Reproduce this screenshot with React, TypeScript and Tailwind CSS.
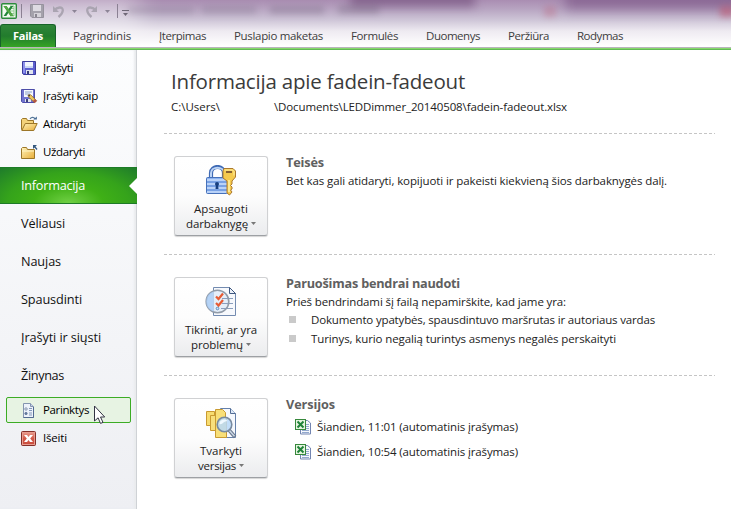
import { useLayoutEffect, useRef, useState } from "react";
import type { ReactNode } from "react";

/* A single line of text whose tracking is adjusted to fill a given width. */
function Label({ w, text, className = "" }: { w: number; text: string; className?: string }) {
  const ref = useRef<HTMLSpanElement>(null);
  const [spacing, setSpacing] = useState(0);
  useLayoutEffect(() => {
    if (ref.current) {
      setSpacing((w - ref.current.getBoundingClientRect().width) / text.length);
    }
  }, [w, text]);
  return (
    <span ref={ref} className={`inline-block whitespace-pre ${className}`} style={{ letterSpacing: spacing }}>
      {text}
    </span>
  );
}

function ExcelLogo() {
  return (
    <svg width="16" height="16" viewBox="0 0 16 16">
      <rect x=".7" y=".7" width="14.6" height="14.6" rx="1" fill="#f4fbf2" stroke="#2c8a3c" strokeWidth="1.4" />
      <path d="M9 3h4v10H9M9 5.5h4M9 8h4M9 10.5h4" fill="none" stroke="#8fc98f" />
      <path d="M2.5 3h3l2 3 2.2-3h2.6L8.9 8l3.6 5h-3l-2-3.2L5.3 13H2.6L6 8z" fill="#23863a" />
      <path d="M2.5 3h3l7 10h-3z" fill="#55a845" />
    </svg>
  );
}

function GreySave() {
  return (
    <svg width="14" height="14" viewBox="0 0 14 14">
      <path d="M.5.5h13v13H2L.5 12z" fill="#a4a1ab" stroke="#96929d" />
      <path d="M3 1h8v6H3z" fill="#dedbe2" />
      <path d="M4 9h7v4H4z" fill="#d5d2d9" />
      <path d="M5 10h2v3H5z" fill="#898590" />
    </svg>
  );
}

function Undo({ flip = false }: { flip?: boolean }) {
  return (
    <svg width="13" height="13" viewBox="0 0 13 13" className={flip ? "-scale-x-100" : ""}>
      <path d="M2 5.5C5 2 11 1 10.8 5.5 10.6 8.5 9 10 6.5 12" fill="none" stroke="#aaa4b1" strokeWidth="2.3" />
      <path d="M1 1v6h6z" fill="#aaa4b1" />
    </svg>
  );
}

function Caret({ className = "" }: { className?: string }) {
  return (
    <svg width="5" height="3" viewBox="0 0 5 3" className={className}>
      <path d="M0 0h5L2.5 3z" fill="currentColor" />
    </svg>
  );
}

function SaveIcon() {
  return (
    <svg width="16" height="16" viewBox="0 0 16 16">
      <path d="M1.5 1.5h13v13h-12l-1-1z" fill="#5c5fd0" stroke="#3b3c9b" />
      <path d="M2 2h2v11H2z" fill="#8d90ec" />
      <path d="M4 2h8v6H4z" fill="#f1f5fd" />
      <path d="M4 6h8v2H4z" fill="#cbd7f3" />
      <path d="M5 10h7v4H5z" fill="#dfe4ee" />
      <path d="M6 11h2v3H6z" fill="#343a75" />
    </svg>
  );
}

function SaveAsIcon() {
  return (
    <svg width="17" height="16" viewBox="0 0 17 16">
      <path d="M.5 1.5h13v13h-12l-1-1z" fill="#7174cf" stroke="#4c4da8" />
      <path d="M3 2h9v7H3z" fill="#f5f8fd" />
      <path d="M4 4h7M4 6h5" stroke="#8aa0c8" />
      <path d="M4 11h6v3H4z" fill="#e2e7ef" />
      <path d="M5 11h2v3H5z" fill="#3d427e" />
      <path d="M7 7l2.6-.3 6 6-2 2-6-5.6z" fill="#eac55d" stroke="#8f6829" strokeWidth=".8" />
      <path d="M7 7l2-.2-.3 2z" fill="#333" />
      <path d="M13.8 11l2 1.9-2 2-2-2z" fill="#b65345" />
    </svg>
  );
}

function FolderIcon({ open = false }: { open?: boolean }) {
  return (
    <svg width="17" height="16" viewBox="0 0 17 16">
      <defs>
        <linearGradient id="folder" x1="0" y1="0" x2="1" y2="1">
          <stop offset="0" stopColor="#fff3b9" />
          <stop offset="1" stopColor="#e8ad38" />
        </linearGradient>
      </defs>
      {open ? (
        <>
          <path d="M.5 13.5v-10l1-1h4l1 2h6v9z" fill="#f3d27a" stroke="#9c7628" />
          <path d="M.8 14.5l3.5-7h11.9l-3.4 7z" fill="url(#folder)" stroke="#9c7628" />
          <path d="M9 2.8c1.5-2 4-2 5 .2" fill="none" stroke="#557799" strokeWidth="1.2" />
          <path d="M12.3 3.5h3.6V.5z" fill="#456b95" />
        </>
      ) : (
        <>
          <path d="M.5 14.5v-10l1-1h4l1 2h7v9z" fill="url(#folder)" stroke="#9c7628" />
          <path d="M1 7h12" stroke="#fff4c4" />
          <path d="M12 1h4L12 5z" fill="#35587f" />
          <path d="M13.5 2.5L16 5.5" stroke="#35587f" strokeWidth="1.3" />
        </>
      )}
    </svg>
  );
}

function OptionsIcon() {
  return (
    <svg width="13" height="15" viewBox="0 0 13 15">
      <path d="M1.5.5h7l3 3v11h-10z" fill="#edf2fa" stroke="#8494af" />
      <path d="M11.5 4v10.5h-10" fill="none" stroke="#526a90" />
      <path d="M8.5.5v3h3" fill="#c5d3e9" stroke="#8494af" />
      <circle cx="4" cy="6" r="1.2" fill="#fff" stroke="#65799b" strokeWidth=".8" />
      <circle cx="4" cy="10.5" r="1.2" fill="#637aa0" stroke="#65799b" strokeWidth=".8" />
      <path d="M7 5.5h3M7 7.5h3M7 10h3M7 12h3" stroke="#8297b9" />
    </svg>
  );
}

function ExitIcon() {
  return (
    <svg width="15" height="15" viewBox="0 0 15 15">
      <defs>
        <linearGradient id="exit" x2="0" y2="1">
          <stop stopColor="#eba597" />
          <stop offset=".5" stopColor="#d25948" />
          <stop offset="1" stopColor="#c94b3c" />
        </linearGradient>
      </defs>
      <rect x=".5" y=".5" width="14" height="14" rx="1" fill="url(#exit)" stroke="#852f29" />
      <rect x="1.5" y="1.5" width="12" height="12" fill="none" stroke="#e79b8e" />
      <path d="M3 4h3l1.5 2L9 4h3L9.2 7.5 12 11H9L7.5 9 6 11H3l2.8-3.5z" fill="#fff" />
    </svg>
  );
}

function LockIcon() {
  return (
    <svg width="32" height="32" viewBox="0 0 32 32">
      <path d="M6 14V8c0-8 13-8 13 0v6" fill="none" stroke="#3f6ab4" strokeWidth="4.2" />
      <path d="M6 14V8c0-7 13-7 13 0v6" fill="none" stroke="#bcd4f5" strokeWidth="2" />
      <rect x="1.5" y="12.5" width="21" height="16" rx="1" fill="#8db3ef" stroke="#4671ba" />
      <path d="M2 15h20M2 19h20M2 23h20M2 27h20" stroke="#c8ddfb" strokeWidth="1.5" />
      <path d="M2 17h20M2 21h20M2 25h20" stroke="#6590d9" />
      <circle cx="12" cy="19" r="2" fill="#173f7f" />
      <path d="M11 19h2l.5 5h-3z" fill="#173f7f" />
      <path d="M19 3.5h9l2.5 2.5v6L27 16v3l-1.5 1.5L27 22v2l-1.5 1 1.5 2-2.5 3-2.5-2V16l-4-3V6z" fill="#f5ca4e" stroke="#ac782c" />
      <path d="M19.5 5h8l1.5 1.5v4" fill="none" stroke="#fff0a4" />
      <path d="M21 7h6" stroke="#855f2f" strokeWidth="2" />
      <path d="M24 15v12" stroke="#fff2a7" strokeWidth="1.5" />
    </svg>
  );
}

function CheckIcon() {
  return (
    <svg width="32" height="32" viewBox="0 0 32 32">
      <path d="M8.5 1.5h16l6 6v22h-22z" fill="#f7f9fd" stroke="#738bb0" />
      <path d="M24.5 1.5v6h6z" fill="#edf2fa" stroke="#3f5880" />
      <path d="M20 12.5h8M20 17.5h8M16 22.5h12" stroke="#8a9ebd" />
      <circle cx="12.5" cy="15.5" r="11.3" fill="#dfeaf7" fillOpacity=".75" stroke="#919ba8" strokeWidth="1.6" />
      <path d="M8.5 5.5A10.5 10.5 0 0 0 8.5 25.500z" fill="#a9ccf5" fillOpacity=".8" />
      <path d="M17 12.500h6M17 17.500h6M16 22.500h5" stroke="#8a9ebd" />
      <path d="M11 10.500l2.500 2.500L18 7.500M11 17l2.500 2.500L18 14" fill="none" stroke="#e65c35" strokeWidth="2.200" />
      <circle cx="12.500" cy="22.500" r="1.300" fill="#d2e3f7" stroke="#5c8cbc" />
    </svg>
  );
}

function VersionsIcon() {
  return (
    <svg width="32" height="32" viewBox="0 0 32 32">
      <path d="M1.5 4.5h8v14h-8z" fill="#f7dc70" stroke="#c99a31" />
      <path d="M5.5 8.5h9v15h-9z" fill="#f8df7c" stroke="#c99a31" />
      <g transform="translate(0 1)">
        <path d="M15.5.5h10l5 5v24h-15z" fill="#f5f8fd" stroke="#6580aa" />
        <path d="M25.5.5v5h5" fill="#dce8f7" stroke="#526c94" />
      </g>
      <path d="M10.5 2.5h7l3 3v5h1v20h-11z" fill="#f8df78" stroke="#c99a31" />
      <path d="M24 23l6 7" stroke="#69788e" strokeWidth="3.5" />
      <path d="M24 23l5.5 6.3" stroke="#c9d6e5" strokeWidth="1.5" />
      <circle cx="19.5" cy="17.5" r="7.3" fill="#b9d9f8" fillOpacity=".85" stroke="#788a9f" strokeWidth="1.6" />
      <path d="M14.5 17c0-4 5-6 8-3-4 0-5 4-8 3z" fill="#f0f9ff" />
    </svg>
  );
}

function WorkbookIcon() {
  return (
    <svg width="16" height="16" viewBox="0 0 16 16">
      <path d="M5.5 1.5h7l3 2.5v11h-10z" fill="#f6f8fd" stroke="#7385b1" />
      <path d="M11 5.5h3M11 7.5h3M11 9.5h3M7 11.5h7M7 13.5h7" stroke="#93a9ce" />
      <rect x=".5" y=".5" width="10" height="10" fill="#e5f5df" stroke="#37883c" />
      <path d="M2.5 2.5l6 6M8.5 2.5l-6 6" stroke="#208239" strokeWidth="2" />
    </svg>
  );
}

function Tab({ w, text, gap }: { w: number; text: string; gap: string }) {
  return (
    <div className={gap}>
      <Label w={w} text={text} className="text-[11.5px] text-[#3d3d3d]" />
    </div>
  );
}

function Command({ w, text, icon }: { w: number; text: string; icon: ReactNode }) {
  return (
    <div className="flex h-7 items-center pl-[21px]">
      <div className="flex w-[22px] items-center">{icon}</div>
      <Label w={w} text={text} className="text-[11.5px] text-black" />
    </div>
  );
}

function Section({ w, text }: { w: number; text: string }) {
  return (
    <div className="flex h-[38px] items-center pl-[21px]">
      <Label w={w} text={text} className="text-[12.7px] text-[#111]" />
    </div>
  );
}

function BigButton({ icon, first, second, w1, w2 }: { icon: ReactNode; first: string; second: string; w1: number; w2: number }) {
  return (
    <div className="flex h-[80px] w-[94px] shrink-0 flex-col items-center rounded-[3px] border border-[#d0d1d3] border-b-[#9da0a4] bg-gradient-to-b from-white via-[#fdfdfd] to-[#ebecee] pt-2 shadow-[0_1px_1px_#d5d5d5]">
      {icon}
      <Label w={w1} text={first} className="mt-[4px] h-[15px] text-[11.5px] leading-[15px] text-[#222]" />
      <div className="flex h-[15px] items-center gap-[3px]">
        <Label w={w2} text={second} className="text-[11.5px] leading-[15px] text-[#222]" />
        <Caret className="text-[#777]" />
      </div>
    </div>
  );
}

function Divider() {
  return <div className="h-px w-[551px] bg-[repeating-linear-gradient(90deg,#c5c5c5_0_3px,transparent_3px_5px)]" />;
}

function Panel({ button, children }: { button: ReactNode; children: ReactNode }) {
  return (
    <div className="flex h-[120px] gap-[18px] pt-[22px] pl-[10px]">
      {button}
      <div className="-mt-[2px]">{children}</div>
    </div>
  );
}

function Heading({ w, text }: { w: number; text: string }) {
  return (
    <div className="flex h-[18px] items-center">
      <Label w={w} text={text} className="text-[12.7px] font-bold text-[#606060]" />
    </div>
  );
}

function Line({ w, text, className = "" }: { w: number; text: string; className?: string }) {
  return (
    <div className={`flex items-center ${className}`}>
      <Label w={w} text={text} className="text-[11.5px] text-[#222]" />
    </div>
  );
}

function Bullet({ w, text }: { w: number; text: string }) {
  return (
    <div className="flex h-[19px] items-center pl-[3px]">
      <div className="mr-[15px] size-[7px] bg-[#cacaca]" />
      <Label w={w} text={text} className="text-[11.5px] text-[#222]" />
    </div>
  );
}

function Version({ w, text }: { w: number; text: string }) {
  return (
    <div className="flex h-[25px] items-center gap-[6px] pl-[9px]">
      <WorkbookIcon />
      <Label w={w} text={text} className="text-[11.5px] text-[#222]" />
    </div>
  );
}

export default function App() {
  return (
    <div className="h-[509px] w-[731px] overflow-hidden bg-white font-['Open_Sans','Noto_Sans',sans-serif]">
      <header className="relative flex h-[50px] flex-col bg-[linear-gradient(180deg,#aa8db2_0px,#b7a4c1_9px,#cec5d7_20px,#eeeaf1_31px,#fff_46px)]">
        <div className="absolute inset-0 overflow-hidden">
          <div className="absolute -top-[10px] left-[350px] h-[17px] w-[125px] bg-[#704c79]/60 blur-[5px]" />
          <div className="absolute -top-[10px] left-[565px] h-[20px] w-[180px] bg-[#775082]/60 blur-[6px]" />
          <div className="absolute -top-[7px] -left-[10px] h-[44px] w-[150px] bg-white/40 blur-[12px]" />
          <div className="absolute top-[7px] left-[128px] h-[7px] w-[66px] bg-[#70627b]/25 blur-[3px]" />
          <div className="absolute top-[6px] left-[202px] h-[8px] w-[54px] bg-[#70627b]/25 blur-[3px]" />
          <div className="absolute top-[6px] left-[270px] h-[8px] w-[54px] bg-[#6d5d78]/30 blur-[3px]" />
          <div className="absolute top-[5px] left-[338px] h-[9px] w-[41px] bg-[#6d5d78]/30 blur-[3px]" />
          <div className="absolute top-[6px] left-[544px] h-[11px] w-[12px] bg-[#b9546d]/30 blur-[3px]" />
          <div className="absolute top-[6px] left-[720px] h-[11px] w-[14px] bg-[#c04e66]/50 blur-[3px]" />
        </div>
        <div className="relative flex h-[22px] items-center pl-px">
          <ExcelLogo />
          <div className="ml-[4px] h-[14px] w-px bg-[#8b8193]" />
          <div className="ml-[8px]"><GreySave /></div>
          <div className="ml-[8px]"><Undo /></div>
          <Caret className="ml-[7px] text-[#8c8496]" />
          <div className="ml-[8px]"><Undo flip /></div>
          <Caret className="ml-[7px] text-[#8c8496]" />
          <div className="ml-[7px] h-[14px] w-px bg-[#8b8193]" />
          <div className="ml-[4px] flex flex-col items-center gap-[2px] pt-[3px] text-[#6e6776]">
            <div className="h-px w-[7px] bg-current" />
            <Caret />
          </div>
        </div>
        <nav className="relative flex h-[25px] items-end">
          <div className="flex h-[23px] w-[56px] items-center justify-center rounded-t-[3px] border border-b-0 border-[#176329] bg-[linear-gradient(180deg,#30853a,#227c2d_50%,#36a325)] pt-px">
            <Label w={30} text="Failas" className="text-[11px] font-bold text-white" />
          </div>
          <div className="flex h-[23px] items-center pb-[4px]">
            <Tab gap="ml-[17px]" w={58} text="Pagrindinis" />
            <Tab gap="ml-[28px]" w={47} text="Įterpimas" />
            <Tab gap="ml-[28px]" w={89} text="Puslapio maketas" />
            <Tab gap="ml-[28px]" w={47} text="Formulės" />
            <Tab gap="ml-[28px]" w={54} text="Duomenys" />
            <Tab gap="ml-[28px]" w={41} text="Peržiūra" />
            <Tab gap="ml-[28px]" w={46} text="Rodymas" />
          </div>
        </nav>
        <div className="relative h-[3px] border-t border-[#b9b4bd] bg-[linear-gradient(180deg,#87d86c_50%,#61b956_50%)]" />
      </header>

      <div className="flex h-[459px]">
        <aside className="relative flex w-[137px] shrink-0 flex-col border-r border-[#cfd2d6] bg-gradient-to-b from-[#fcfdfe] to-[#eeeff3] pt-1 shadow-[inset_-2px_0_2px_#e9ebee]">
          <Command w={30} text="Įrašyti" icon={<SaveIcon />} />
          <Command w={55} text="Įrašyti kaip" icon={<SaveAsIcon />} />
          <Command w={43} text="Atidaryti" icon={<FolderIcon open />} />
          <Command w={42} text="Uždaryti" icon={<FolderIcon />} />
          <div className="-mr-px mt-px flex h-[37px] items-center justify-between border-y border-y-[#1d7b27] bg-[radial-gradient(ellipse_72%_140%_at_50%_100%,#70d044_0%,#3fb016_35%,#35a31b_62%,#1e7b2b_100%)] pl-[21px]">
            <Label w={64} text="Informacija" className="text-[12.7px] text-white" />
            <svg width="8" height="16" viewBox="0 0 8 16"><path d="M8 0v16L0 8z" fill="#fff" /></svg>
          </div>
          <div className="pt-px">
            <Section w={44} text="Vėliausi" />
            <Section w={40} text="Naujas" />
            <Section w={61} text="Spausdinti" />
            <Section w={80} text="Įrašyti ir siųsti" />
            <Section w={43} text="Žinynas" />
          </div>
          <div className="ml-[6px] mt-[2px] flex h-[26px] w-[125px] items-center rounded-[2px] border border-[#3cac25] bg-[#e7f3e3] pl-[15px]">
            <div className="w-[21px]"><OptionsIcon /></div>
            <Label w={46} text="Parinktys" className="text-[11.5px] text-black" />
          </div>
          <div className="mt-px"><Command w={24} text="Išeiti" icon={<ExitIcon />} /></div>
          <svg width="13" height="20" viewBox="0 0 13 20" className="absolute top-[355px] left-[93px]">
            <path d="M1.500 1v15l3.600-3.200 2.400 5.600 2.500-1-2.500-5.400h4.200z" fill="#fff" stroke="#343444" />
          </svg>
        </aside>

        <main className="flex-1 pl-[27px]">
          <div className="h-[83px] pl-[7px] pt-[16px]">
            <div className="flex h-[30px] items-center">
              <Label w={294} text="Informacija apie fadein-fadeout" className="text-[20.5px] leading-[30px] text-[#3b3b3b]" />
            </div>
            <div className="flex h-[22px] items-center">
              <Label w={49} text="C:\Users\" className="text-[11.5px] text-[#222]" />
              <Label w={293} text="\Documents\LEDDimmer_20140508\fadein-fadeout.xlsx" className="ml-[54px] text-[11.5px] text-[#222]" />
            </div>
          </div>
          <Divider />
          <Panel button={<BigButton icon={<LockIcon />} first="Apsaugoti" second="darbaknygę" w1={54} w2={62} />}>
            <Heading w={38} text="Teisės" />
            <Line className="h-[18px]" w={381} text="Bet kas gali atidaryti, kopijuoti ir pakeisti kiekvieną šios darbaknygės dalį." />
          </Panel>
          <Divider />
          <Panel button={<BigButton icon={<CheckIcon />} first="Tikrinti, ar yra" second="problemų" w1={72} w2={52} />}>
            <Heading w={174} text="Paruošimas bendrai naudoti" />
            <Line className="h-[17px]" w={280} text="Prieš bendrindami šį failą nepamirškite, kad jame yra:" />
            <Bullet w={344} text="Dokumento ypatybės, spausdintuvo maršrutas ir autoriaus vardas" />
            <Bullet w={305} text="Turinys, kurio negalią turintys asmenys negalės perskaityti" />
          </Panel>
          <Divider />
          <Panel button={<BigButton icon={<VersionsIcon />} first="Tvarkyti" second="versijas" w1={42} w2={38} />}>
            <Heading w={49} text="Versijos" />
            <Version w={201} text="Šiandien, 11:01 (automatinis įrašymas)" />
            <Version w={201} text="Šiandien, 10:54 (automatinis įrašymas)" />
          </Panel>
        </main>
      </div>
    </div>
  );
}
